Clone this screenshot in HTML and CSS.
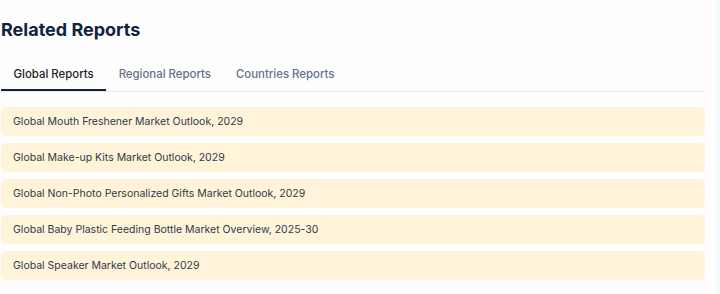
FILE: index.html
```html
<!DOCTYPE html>
<html lang="en">
<head>
    <meta charset="UTF-8">
    <meta name="viewport" content="width=device-width, initial-scale=1.0">
    <title>Related Reports</title>
    <link rel="stylesheet" href="styles.css">
</head>
<body>
    <div class="page">
        <div class="related">
            <h2>Related Reports</h2>

            <div class="tabs">
                <div class="tab active">Global Reports</div>
                <div class="tab">Regional Reports</div>
                <div class="tab">Countries Reports</div>
            </div>

            <div class="report-list">
                <a class="report" href="#">Global Mouth Freshener Market Outlook, 2029</a>
                <a class="report" href="#">Global Make-up Kits Market Outlook, 2029</a>
                <a class="report" href="#">Global Non-Photo Personalized Gifts Market Outlook, 2029</a>
                <a class="report" href="#">Global Baby Plastic Feeding Bottle Market Overview, 2025-30</a>
                <a class="report" href="#">Global Speaker Market Outlook, 2029</a>
            </div>
        </div>

        <div class="side"></div>
    </div>
</body>
</html>
```

FILE: styles.css
```css
html, body {
    margin: 0;
    padding: 0;
    background-color: #fefefe;
}

body {
    font-family: Inter, "Noto Sans", sans-serif;
}

.page {
    display: flex;
    height: 294px;
}

.related {
    width: 704px;
    margin-left: 1px;
}

.side {
    width: 4px;
    margin-left: 11px;
    background-color: #f3fbf8;
}

h2 {
    margin: 0;
    padding-top: 18px;
    font-size: 18px;
    line-height: 24px;
    font-weight: 700;
    color: #0e2440;
}

.tabs {
    display: flex;
    margin-top: 18px;
    border-bottom: 1px solid #e6e7e9;
}

.tab {
    padding: 0 12.5px;
    height: 31px;
    line-height: 28px;
    font-size: 11.4px;
    font-weight: 500;
    color: #64708a;
    box-sizing: border-box;
}

.tab.active {
    color: #1f2329;
    border-bottom: 2px solid #0e2440;
    margin-bottom: -1px;
}

.report-list {
    display: flex;
    flex-direction: column;
    gap: 7px;
    margin-top: 15px;
}

.report {
    display: block;
    height: 29px;
    line-height: 29px;
    padding: 0 12px;
    background-color: #fff4d9;
    border-radius: 5px;
    font-size: 10.5px;
    color: #2f3a4b;
    text-decoration: none;
}
```
